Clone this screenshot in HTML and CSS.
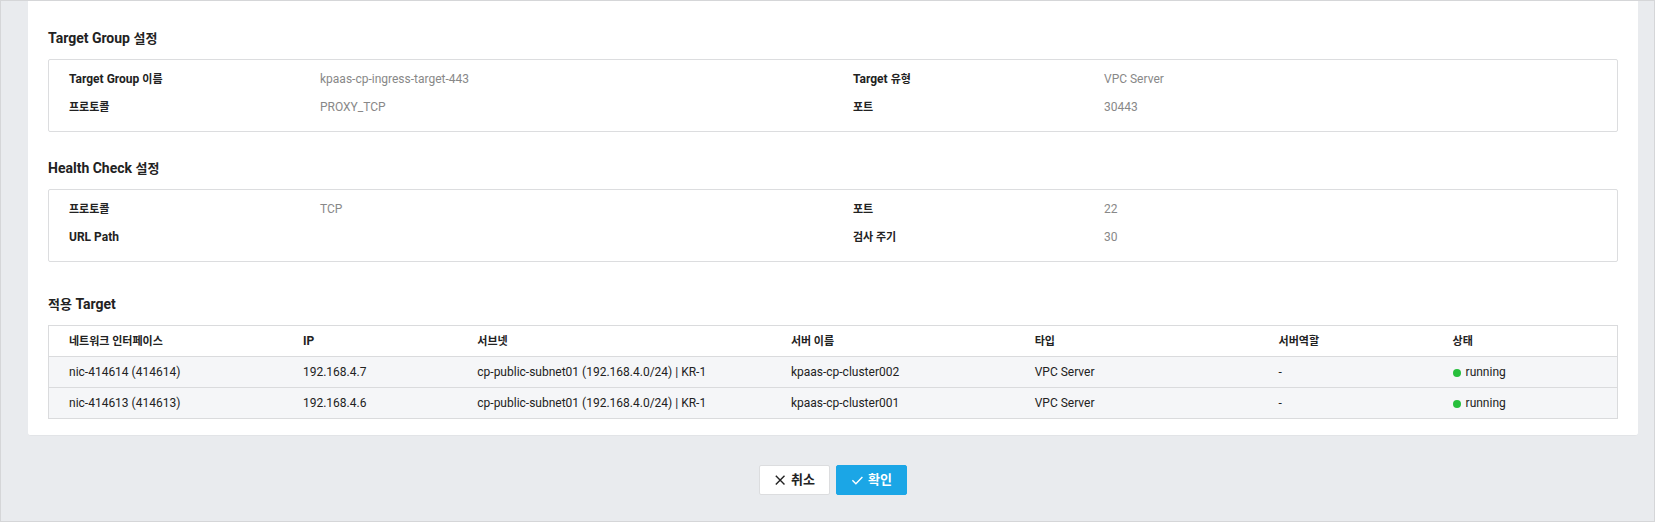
FILE: index.html
```html
<!DOCTYPE html>
<html lang="ko">
<head>
<meta charset="utf-8">
<title>Target Group 설정</title>
<link rel="stylesheet" href="styles.css">
</head>
<body>
<main class="page">
  <div class="panel">
    <section class="section">
      <h2 class="title">Target Group <span class="ko">설정</span></h2>
      <dl class="info">
        <div class="item"><dt>Target Group <span class="ko">이름</span></dt><dd>kpaas-cp-ingress-target-443</dd></div>
        <div class="item"><dt>Target <span class="ko">유형</span></dt><dd>VPC Server</dd></div>
        <div class="item"><dt><span class="ko">프로토콜</span></dt><dd>PROXY_TCP</dd></div>
        <div class="item"><dt><span class="ko">포트</span></dt><dd>30443</dd></div>
      </dl>
    </section>
    <section class="section">
      <h2 class="title">Health Check <span class="ko">설정</span></h2>
      <dl class="info">
        <div class="item"><dt><span class="ko">프로토콜</span></dt><dd>TCP</dd></div>
        <div class="item"><dt><span class="ko">포트</span></dt><dd>22</dd></div>
        <div class="item"><dt>URL Path</dt><dd></dd></div>
        <div class="item"><dt><span class="ko">검사 주기</span></dt><dd>30</dd></div>
      </dl>
    </section>
    <section class="section section-targets">
      <h2 class="title"><span class="ko">적용</span> Target</h2>
      <table class="targets">
        <colgroup>
          <col class="col-nic"><col class="col-ip"><col class="col-subnet"><col class="col-name"><col class="col-type"><col class="col-role"><col>
        </colgroup>
        <thead>
          <tr>
            <th scope="col"><span class="ko">네트워크 인터페이스</span></th>
            <th scope="col">IP</th>
            <th scope="col"><span class="ko">서브넷</span></th>
            <th scope="col"><span class="ko">서버 이름</span></th>
            <th scope="col"><span class="ko">타입</span></th>
            <th scope="col"><span class="ko">서버역할</span></th>
            <th scope="col"><span class="ko">상태</span></th>
          </tr>
        </thead>
        <tbody>
          <tr>
            <td>nic-414614 (414614)</td>
            <td>192.168.4.7</td>
            <td>cp-public-subnet01 (192.168.4.0/24) | KR-1</td>
            <td>kpaas-cp-cluster002</td>
            <td>VPC Server</td>
            <td>-</td>
            <td><span class="status">running</span></td>
          </tr>
          <tr>
            <td>nic-414613 (414613)</td>
            <td>192.168.4.6</td>
            <td>cp-public-subnet01 (192.168.4.0/24) | KR-1</td>
            <td>kpaas-cp-cluster001</td>
            <td>VPC Server</td>
            <td>-</td>
            <td><span class="status">running</span></td>
          </tr>
        </tbody>
      </table>
    </section>
  </div>
  <div class="actions">
    <button type="button" class="btn">
      <svg class="icon" viewBox="0 0 12 12" aria-hidden="true"><path d="M1.800 1.800l8.700 8.700M10.500 1.800L1.800 10.500"/></svg>
      취소
    </button>
    <button type="button" class="btn btn-primary">
      <svg class="icon" viewBox="0 0 12 12" aria-hidden="true"><path d="M1.400 6.200L4.900 9.700L11.400 3"/></svg>
      확인
    </button>
  </div>
</main>
</body>
</html>
```

FILE: styles.css
```css
* {
  box-sizing: border-box;
}

body {
  margin: 0;
  background: #e9ebee;
  color: #222;
  font: 12px/16px Roboto, "Noto Sans CJK KR", sans-serif;
}

.page {
  min-height: 100vh;
  padding: 0 16px 24px 27px;
  border: 1px solid #d5d6d8;
}

.panel {
  padding: 27px 20px 16px;
  border-bottom: 1px solid #e2e4e7;
  border-radius: 0 0 3px 3px;
  background: #fff;
}

.section + .section {
  margin-top: 26px;
}

.section + .section-targets {
  margin-top: 32px;
}

.title {
  margin: 0 0 11px;
  font-size: 14px;
  font-weight: 700;
  line-height: 20px;
}

.title .ko {
  font-size: 13px;
}

.ko {
  font-size: 11px;
  line-height: 1;
}

.info {
  display: grid;
  grid-template-columns: 1fr 1fr;
  margin: 0;
  padding: 5px 0 10px;
  border: 1px solid #dcdddf;
  border-radius: 2px;
}

.item {
  display: flex;
  padding-left: 20px;
  line-height: 28px;
}

.item dt {
  width: 251px;
  font-weight: 700;
}

.item dd {
  margin: 0;
  color: #888;
}

.targets {
  width: 100%;
  border: 1px solid #dadbdd;
  border-spacing: 0;
  table-layout: fixed;
}

.col-nic { width: 14.92%; }
.col-ip { width: 11.12%; }
.col-subnet { width: 20%; }
.col-name,
.col-type { width: 15.55%; }
.col-role { width: 11.1%; }

.targets th,
.targets td {
  height: 30px;
  padding: 0 0 0 20px;
  text-align: left;
  white-space: nowrap;
}

.targets td {
  height: 31px;
  border-top: 1px solid #dadbdd;
  background: #f5f6f8;
}

.status {
  display: inline-flex;
  align-items: center;
  gap: 5px;
}

.status::before {
  width: 8px;
  height: 8px;
  margin-top: 2px;
  border-radius: 50%;
  background: #27bf3c;
  content: "";
}

.actions {
  display: flex;
  justify-content: center;
  gap: 6px;
  margin-top: 29px;
}

.btn {
  display: flex;
  align-items: center;
  gap: 5px;
  height: 30px;
  padding: 0 14px;
  border: 1px solid #dcdddf;
  border-radius: 2px;
  background: #fff;
  color: #222;
  font: 700 13px/16px Roboto, "Noto Sans CJK KR", sans-serif;
}

.btn-primary {
  border-color: #1ba6e6;
  background: #1ba6e6;
  color: #fff;
}

.icon {
  width: 12px;
  height: 12px;
  fill: none;
  stroke: currentColor;
  stroke-width: 1.4;
}
```
